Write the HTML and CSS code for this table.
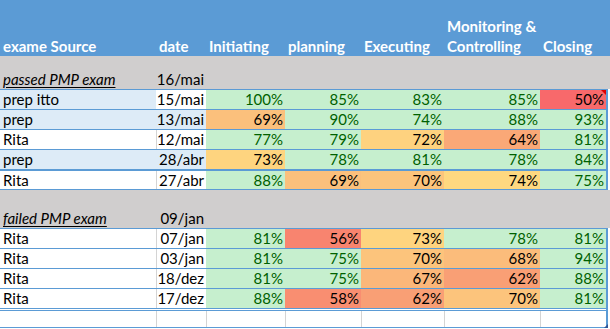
FILE: index.html
```html
<!DOCTYPE html>
<html>
<head>
<meta charset="utf-8">
<link rel="stylesheet" href="styles.css">
</head>
<body>
<div class="sheet">
  <div class="row head">
    <div>exame Source</div>
    <div>date</div>
    <div>Initiating</div>
    <div>planning</div>
    <div>Executing</div>
    <div>Monitoring &amp;<br>Controlling</div>
    <div>Closing</div>
  </div>

  <div class="spacer s1"></div>
  <div class="row label">
    <div class="name"><span class="u">passed PMP exam</span></div>
    <div class="d">16/mai</div>
  </div>

  <div class="block">
    <div class="rec">
      <div class="n lb">prep itto</div><div class="d">15/mai</div>
      <div class="p g">100%</div><div class="p g">85%</div><div class="p g">83%</div><div class="p g">85%</div><div class="p r50 note">50%</div>
    </div>
    <div class="rec">
      <div class="n lb">prep</div><div class="d lb">13/mai</div>
      <div class="p c69">69%</div><div class="p g">90%</div><div class="p g">74%</div><div class="p g">88%</div><div class="p g">93%</div>
    </div>
    <div class="rec">
      <div class="n">Rita</div><div class="d vl">12/mai</div>
      <div class="p g">77%</div><div class="p g">79%</div><div class="p c72">72%</div><div class="p c64">64%</div><div class="p g">81%</div>
    </div>
    <div class="rec">
      <div class="n lb">prep</div><div class="d lb">28/abr</div>
      <div class="p c73">73%</div><div class="p g">78%</div><div class="p g">81%</div><div class="p g">78%</div><div class="p g">84%</div>
    </div>
    <div class="rec thick end">
      <div class="n">Rita</div><div class="d vl">27/abr</div>
      <div class="p g">88%</div><div class="p c69">69%</div><div class="p c70">70%</div><div class="p c74">74%</div><div class="p g">75%</div>
    </div>
  </div>

  <div class="spacer s2"></div>
  <div class="row label">
    <div class="name"><span class="u">failed PMP exam</span></div>
    <div class="d">09/jan</div>
  </div>

  <div class="block">
    <div class="rec">
      <div class="n">Rita</div><div class="d vl">07/jan</div>
      <div class="p g">81%</div><div class="p c56">56%</div><div class="p c73">73%</div><div class="p g">78%</div><div class="p g">81%</div>
    </div>
    <div class="rec">
      <div class="n">Rita</div><div class="d vl">03/jan</div>
      <div class="p g">81%</div><div class="p g">75%</div><div class="p c70">70%</div><div class="p c68">68%</div><div class="p g">94%</div>
    </div>
    <div class="rec">
      <div class="n">Rita</div><div class="d vl">18/dez</div>
      <div class="p g">81%</div><div class="p g">75%</div><div class="p c67">67%</div><div class="p c62">62%</div><div class="p g">88%</div>
    </div>
    <div class="rec dbl">
      <div class="n">Rita</div><div class="d vl">17/dez</div>
      <div class="p g">88%</div><div class="p c58">58%</div><div class="p c62">62%</div><div class="p c70">70%</div><div class="p g">81%</div>
    </div>
    <div class="rec blank">
      <div></div><div class="vl"></div><div class="vl"></div><div class="vl"></div><div class="vl"></div><div class="vl"></div><div class="vl"></div>
    </div>
  </div>
</div>
</body>
</html>
```

FILE: styles.css
```css
* { box-sizing: border-box; }
body {
  margin: 0;
  background: #ffffff;
  font-family: Lato, "Liberation Sans", sans-serif;
  font-size: 15px;
  color: #000;
}
.sheet { width: 610px; }

.row {
  display: grid;
  grid-template-columns: 156px 50px 79px 76px 83px 96px 70px;
}
.head {
  background: #5b9bd5;
  height: 56px;
  color: #fff;
  font-weight: 700;
  line-height: 20px;
}
.head > div {
  align-self: end;
  padding-left: 3px;
  white-space: nowrap;
}

.spacer { background: #d0cece; }
.s1 { height: 13px; }
.s2 { height: 18px; }

.label {
  background: #d0cece;
  height: 20px;
  line-height: 20px;
}
.label .name { padding-left: 3px; font-style: italic; }
.label .name .u { text-decoration: underline; text-underline-offset: 2px; }
.label .d { text-align: right; padding-right: 2px; }

.block {
  width: 608px;
  border-right: 2px solid #5b9bd5;
}
.rec {
  display: grid;
  grid-template-columns: 156px 50px 79px 76px 83px 96px 66px;
  height: 20px;
  border-top: 1px solid #5b9bd5;
  line-height: 19px;
}
.rec.thick { border-top-width: 2px; line-height: 18px; }
.rec.end { height: 21px; border-bottom: 1px solid #5b9bd5; }
.rec.dbl { height: 23px; border-bottom: 3px double #5b9bd5; }
.rec.blank { border-top: none; height: 17px; border-bottom: 1px solid #5b9bd5; }

.n { padding-left: 3px; white-space: nowrap; }
.d { text-align: right; padding-right: 2px; }
.p { text-align: right; padding-right: 2px; }
.vl { border-left: 1px solid #d4d4d4; }
.lb { background: #ddebf7; }

.g { background: #c6efce; color: #006100; }
.r50 { background: #f8696b; }
.c56 { background: #f8846f; }
.c58 { background: #f98e71; }
.c62 { background: #f99f75; }
.c64 { background: #faa877; }
.c67 { background: #fbb77a; }
.c68 { background: #fbbc7b; }
.c69 { background: #fbc07c; }
.c70 { background: #fcc47c; }
.c72 { background: #fed27f; }
.c73 { background: #fed47f; }
.c74 { background: #fed880; }

.note { position: relative; }
.note::after {
  content: "";
  position: absolute;
  top: 0;
  right: 0;
  border-top: 5px solid #e00000;
  border-left: 5px solid transparent;
}
.blank > div:last-child { position: relative; }
.blank > div:last-child::after {
  content: "";
  position: absolute;
  right: -2px;
  bottom: -1px;
  border-bottom: 4px solid #2f5597;
  border-left: 4px solid transparent;
}
```
